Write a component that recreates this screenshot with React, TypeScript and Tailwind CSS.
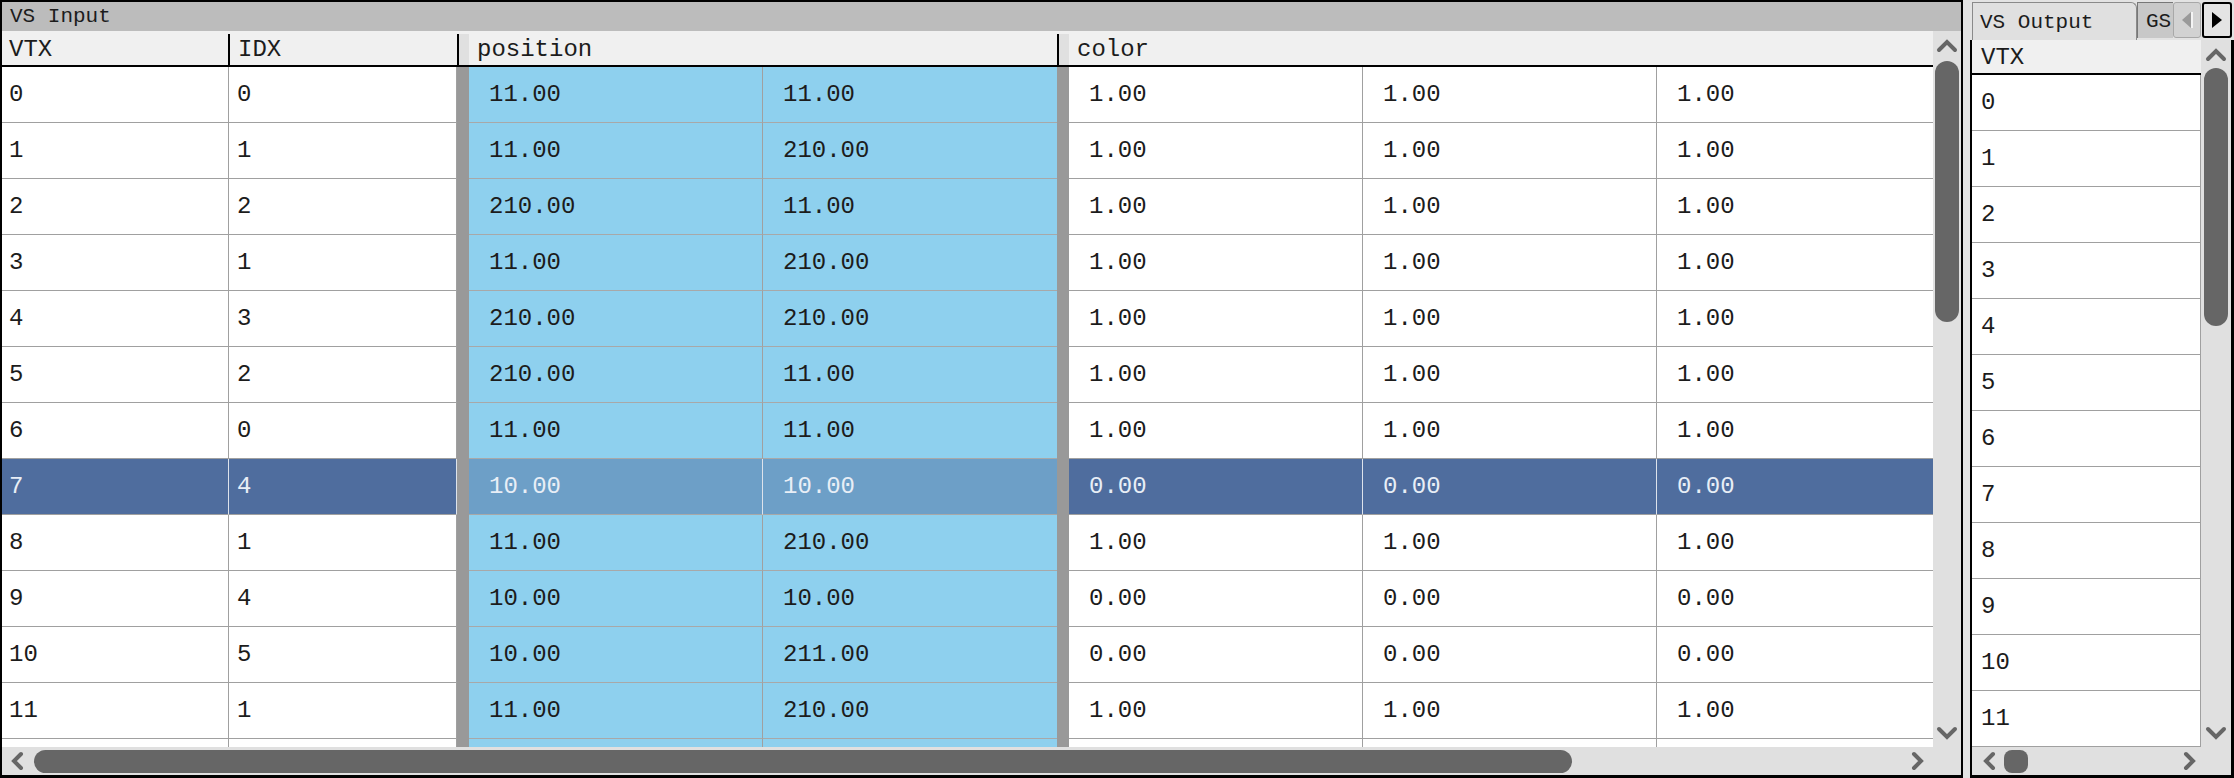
import React from "react"

type Dir = "up" | "down" | "left" | "right"

const rows = [
  ["0", "0", "11.00", "11.00", "1.00", "1.00", "1.00"],
  ["1", "1", "11.00", "210.00", "1.00", "1.00", "1.00"],
  ["2", "2", "210.00", "11.00", "1.00", "1.00", "1.00"],
  ["3", "1", "11.00", "210.00", "1.00", "1.00", "1.00"],
  ["4", "3", "210.00", "210.00", "1.00", "1.00", "1.00"],
  ["5", "2", "210.00", "11.00", "1.00", "1.00", "1.00"],
  ["6", "0", "11.00", "11.00", "1.00", "1.00", "1.00"],
  ["7", "4", "10.00", "10.00", "0.00", "0.00", "0.00"],
  ["8", "1", "11.00", "210.00", "1.00", "1.00", "1.00"],
  ["9", "4", "10.00", "10.00", "0.00", "0.00", "0.00"],
  ["10", "5", "10.00", "211.00", "0.00", "0.00", "0.00"],
  ["11", "1", "11.00", "210.00", "1.00", "1.00", "1.00"],
  ["", "", "", "", "", "", ""],
]

function Chev({ dir }: { dir: Dir }) {
  if (dir === "up" || dir === "down") {
    const pts = dir === "up" ? "3,11 11,3 19,11" : "3,3 11,11 19,3"
    return (
      <svg width="22" height="14" viewBox="0 0 22 14" className="shrink-0">
        <polyline points={pts} fill="none" stroke="#666" strokeWidth="4" strokeLinecap="round" />
      </svg>
    )
  }
  const pts = dir === "left" ? "11,3 4,10 11,17" : "3,3 10,10 3,17"
  return (
    <svg width="14" height="20" viewBox="0 0 14 20" className="shrink-0">
      <polyline points={pts} fill="none" stroke="#666" strokeWidth="4" strokeLinecap="round" />
    </svg>
  )
}

function Row({ r, sel }: { r: string[]; sel: boolean }) {
  const base = sel ? "bg-[#4f6d9e] text-[#e8eef6]" : "bg-white"
  const pos = sel ? "bg-[#6d9fc7] text-[#e8eef6]" : "bg-[#8ed0ee]"
  const div = sel ? "border-r-[#dde3ec]" : "border-r-[#a0a0a0]"
  return (
    <div className="flex h-[56px] shrink-0">
      <div className={`flex w-[227px] items-center border-r border-b border-[#a0a0a0] pl-[7px] ${div} ${base}`}>{r[0]}</div>
      <div className={`flex w-[228px] items-center border-r border-b border-[#a0a0a0] pl-[8px] ${div} ${base}`}>{r[1]}</div>
      <div className="w-[12px] bg-[#999999]" />
      <div className={`flex w-[294px] items-center border-r border-b border-[#a8a8a8] pl-[20px] ${div} ${pos}`}>{r[2]}</div>
      <div className={`flex w-[294px] items-center border-b border-[#a8a8a8] pl-[20px] ${pos}`}>{r[3]}</div>
      <div className="w-[12px] bg-[#999999]" />
      <div className={`flex w-[294px] items-center border-r border-b border-[#a0a0a0] pl-[20px] ${div} ${base}`}>{r[4]}</div>
      <div className={`flex w-[294px] items-center border-r border-b border-[#a0a0a0] pl-[20px] ${div} ${base}`}>{r[5]}</div>
      <div className={`flex flex-1 items-center border-b border-[#a0a0a0] pl-[20px] ${base}`}>{r[6]}</div>
    </div>
  )
}

function LeftPanel() {
  return (
    <div className="flex h-[778px] w-[1963px] shrink-0 flex-col border-2 border-b-[3px] border-black bg-white">
      <div className="h-[29px] bg-[#bcbcbc] pl-[8px] text-[21px] leading-[29px]">VS Input</div>
      <div className="flex h-[716px]">
        <div className="flex flex-1 flex-col overflow-hidden">
          <div className="flex h-[36px] shrink-0 border-b-2 border-black bg-[#f0f0f0] pt-[3px]">
            <div className="flex w-[228px] items-center border-r-2 border-black pl-[7px]">VTX</div>
            <div className="flex w-[229px] items-center border-r-2 border-black pl-[8px]">IDX</div>
            <div className="w-[10px] bg-[#e0e0e0]" />
            <div className="flex w-[590px] items-center border-r-2 border-black pl-[8px]">position</div>
            <div className="w-[10px] bg-[#e0e0e0]" />
            <div className="flex flex-1 items-center pl-[8px]">color</div>
          </div>
          <div className="flex-1 overflow-hidden">
            {rows.map((r, i) => (
              <Row key={i} r={r} sel={i === 7} />
            ))}
          </div>
        </div>
        <div className="flex w-[28px] flex-col items-center bg-[#e0e0e0] pt-[8px] pb-[7px]">
          <Chev dir="up" />
          <div className="mt-[8px] h-[261px] w-[24px] rounded-full bg-[#666666]" />
          <div className="flex-1" />
          <Chev dir="down" />
        </div>
      </div>
      <div className="flex h-[28px] items-center bg-[#e0e0e0] pl-[8px] pr-[36px]">
        <Chev dir="left" />
        <div className="ml-[10px] h-[23px] w-[1538px] rounded-full bg-[#666666]" />
        <div className="flex-1" />
        <Chev dir="right" />
      </div>
    </div>
  )
}

function RightPanel() {
  return (
    <div className="flex h-[778px] w-[264px] shrink-0 flex-col">
      <div className="flex h-[40px] items-end pl-[2px]">
        <div className="h-[38px] w-[165px] rounded-tr-[6px] border border-b-0 border-[#8a8a8a] bg-[#e0e0e0] pl-[7px] text-[21px] leading-[40px]">
          VS Output
        </div>
        <div className="mb-[2px] h-[36px] w-[36px] border-t border-l border-[#777] bg-[#c8c8c8] pl-[8px] text-[21px] leading-[38px]">
          GS
        </div>
        <div className="mb-[2px] flex h-[36px] w-[28px] items-center justify-center rounded-[3px] border border-[#a8a8a8] bg-[#d2d2d2]">
          <svg width="12" height="18" viewBox="0 0 12 18">
            <polygon points="10,1 1,9 10,17" fill="#9a9a9a" />
            <line x1="11" y1="1" x2="11" y2="17" stroke="#ffffff" strokeWidth="1.5" />
          </svg>
        </div>
        <div className="mb-[2px] ml-[1px] flex h-[36px] w-[30px] items-center justify-center rounded-[3px] border-2 border-black bg-[#e4e4e4]">
          <svg width="12" height="18" viewBox="0 0 12 18">
            <polygon points="1,1 11,9 1,17" fill="#000000" />
          </svg>
        </div>
      </div>
      <div className="flex flex-1 flex-col border-x-2 border-r-[3px] border-b-[3px] border-black bg-white">
        <div className="flex h-[707px]">
          <div className="flex w-[229px] flex-col overflow-hidden">
            <div className="flex h-[35px] shrink-0 items-center border-b-2 border-black bg-[#f0f0f0] pt-[2px] pl-[9px]">VTX</div>
            <div className="flex-1 overflow-hidden">
              {rows.slice(0, 12).map((r, i) => (
                <div key={i} className="flex h-[56px] items-center border-r border-b border-[#a0a0a0] pl-[9px]">
                  {r[0]}
                </div>
              ))}
            </div>
          </div>
          <div className="flex flex-1 flex-col items-center bg-[#e0e0e0] pt-[8px] pb-[7px]">
            <Chev dir="up" />
            <div className="mt-[6px] h-[258px] w-[24px] rounded-full bg-[#666666]" />
            <div className="flex-1" />
            <Chev dir="down" />
          </div>
        </div>
        <div className="flex h-[28px] items-center bg-[#e0e0e0] pl-[10px] pr-[34px]">
          <Chev dir="left" />
          <div className="ml-[8px] h-[23px] w-[24px] rounded-[8px] bg-[#666666]" />
          <div className="flex-1" />
          <Chev dir="right" />
        </div>
      </div>
    </div>
  )
}

export default function App() {
  return (
    <div className="flex h-[778px] w-[2234px] gap-[7px] overflow-hidden bg-[#e3e3e3] font-['Liberation_Mono',monospace] text-[24px] text-[#1c1c1c]">
      <LeftPanel />
      <RightPanel />
    </div>
  )
}
